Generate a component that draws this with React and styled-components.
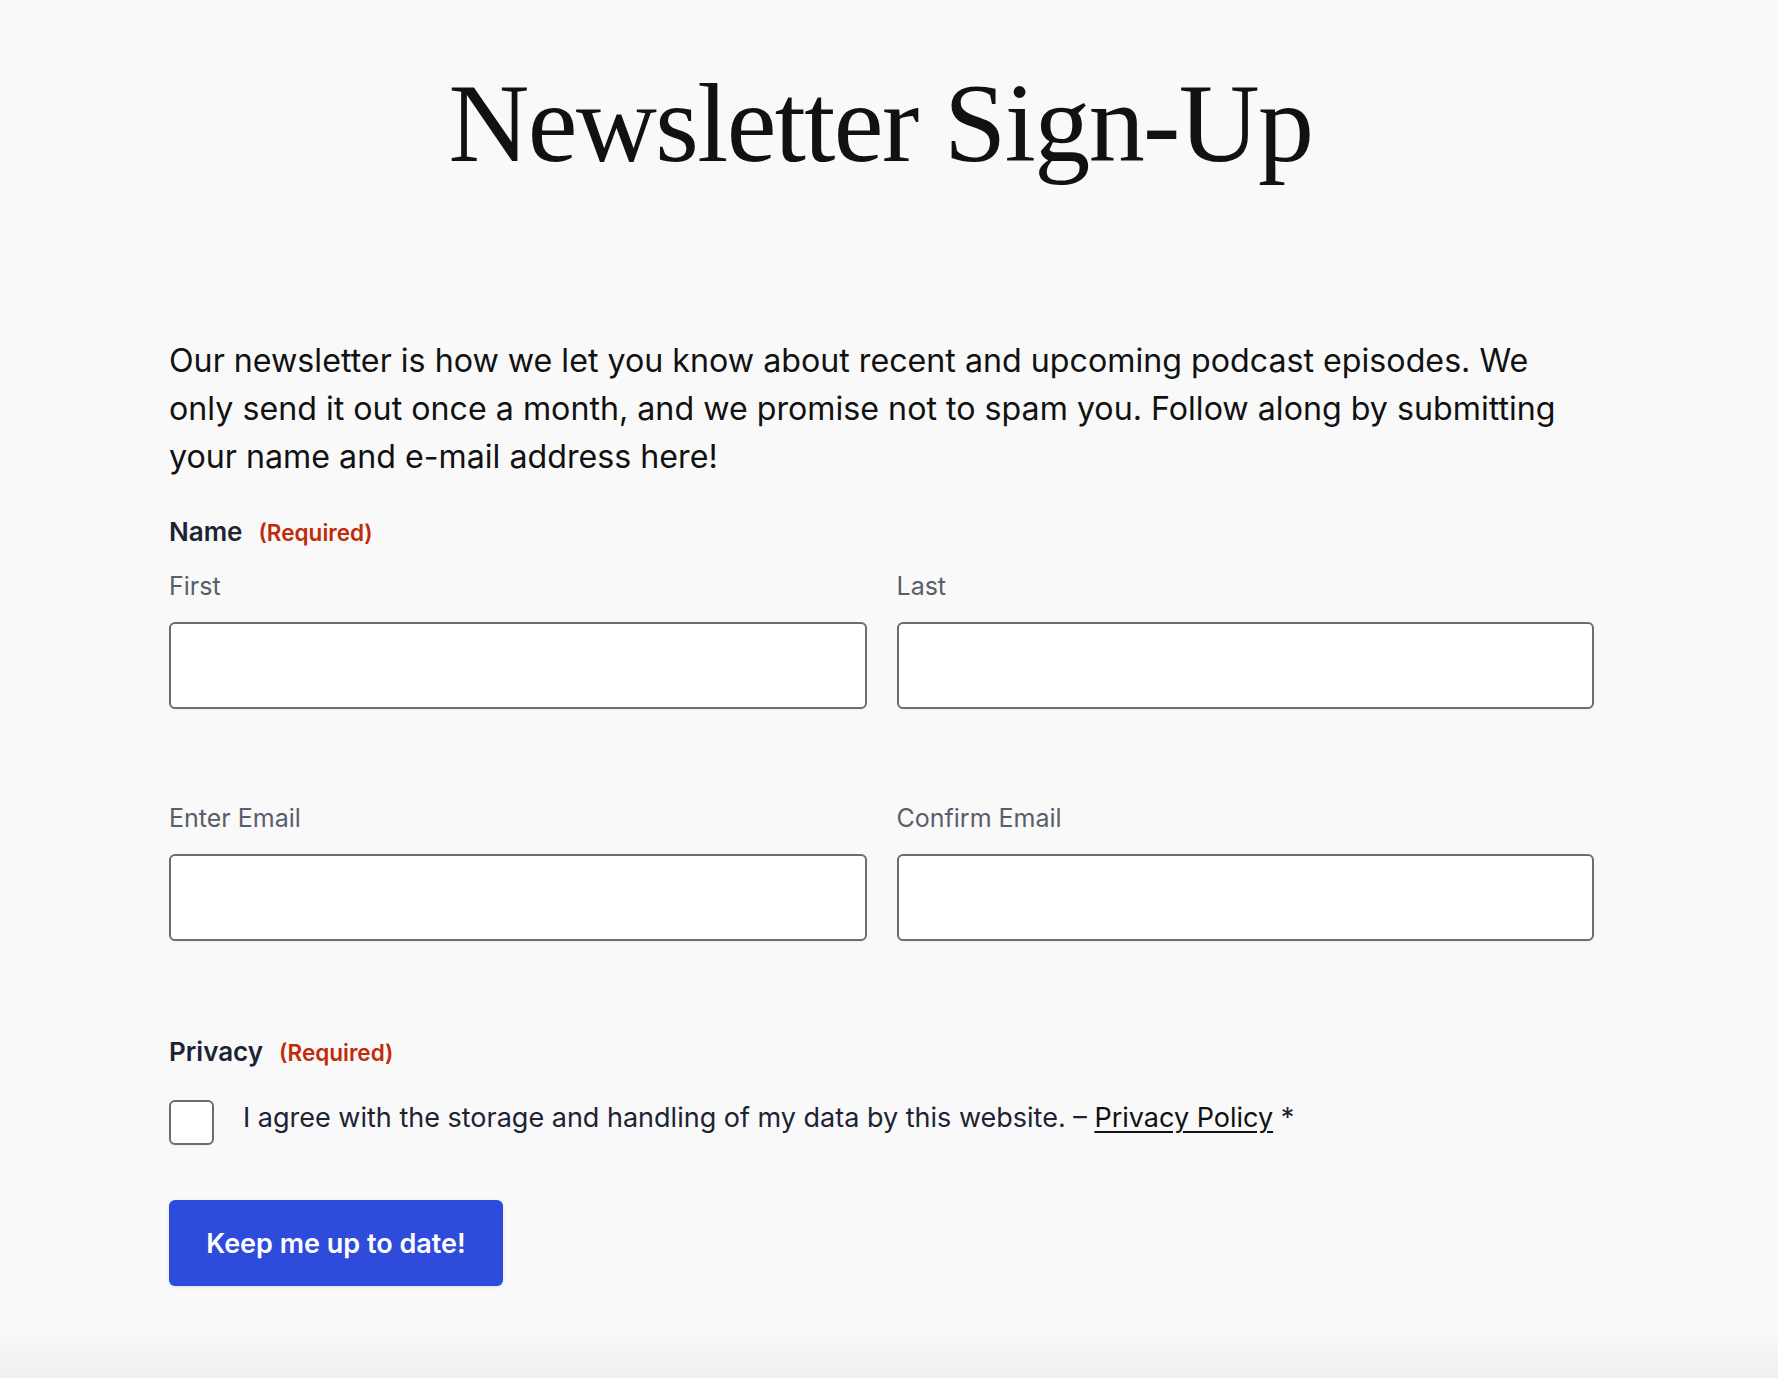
import React from "react";
import styled, { createGlobalStyle } from "styled-components";

const GlobalStyle = createGlobalStyle`
  html, body {
    margin: 0;
    padding: 0;
    background: #f9f9f9;
  }
  body {
    font-family: Inter, "Noto Sans", sans-serif;
    color: #111111;
  }
  * { box-sizing: border-box; }
`;

const Page = styled.div`
  min-height: 1378px;
  background: linear-gradient(to bottom, #f9f9f9 0, #f9f9f9 1330px, #efefef 1378px);
  padding-top: 62px;
`;

const Container = styled.div`
  width: 1440px;
  margin: 0 auto;
`;

const Title = styled.h1`
  margin: 0;
  padding-right: 17px;
  font-family: "Liberation Serif", "Times New Roman", serif;
  font-weight: 400;
  font-size: 112px;
  line-height: 1.1;
  letter-spacing: -1.6px;
  text-align: center;
  color: #111111;
`;

const Intro = styled.p`
  margin: 152px 0 0;
  font-size: 32.2px;
  line-height: 48px;
  color: #111111;
`;

const Form = styled.form`
  margin-top: 35px;
  padding-right: 15px;
`;

const Legend = styled.div`
  display: flex;
  align-items: baseline;
  gap: 16px;
  font-size: 26px;
  font-weight: 600;
  color: #1c2333;
`;

const Required = styled.span`
  font-size: 22.5px;
  font-weight: 600;
  color: #c02b0a;
`;

const Grid = styled.div`
  display: grid;
  grid-template-columns: 1fr 1fr;
  column-gap: 30px;
  margin-top: ${(p) => p.$top || 0}px;
`;

const Field = styled.label`
  display: flex;
  flex-direction: column;
`;

const SubLabel = styled.span`
  font-size: 25px;
  line-height: 30px;
  color: #585e6a;
  margin-bottom: 21px;
`;

const Input = styled.input`
  height: 87px;
  width: 100%;
  border: 2px solid #686e77;
  border-radius: 6px;
  background: #ffffff;
  box-shadow: 0 1px 2px rgba(16, 24, 40, 0.06);
  font: inherit;
  font-size: 24px;
  padding: 0 16px;
  outline: none;
`;

const Section = styled.div`
  margin-top: ${(p) => p.$top}px;
`;

const CheckRow = styled.label`
  display: flex;
  align-items: flex-start;
  gap: 29px;
  margin-top: 33px;
  font-size: 27px;
  line-height: 35px;
  color: #1c2333;
`;

const Box = styled.span`
  width: 45px;
  height: 45px;
  flex: none;
  border: 2px solid #686e77;
  border-radius: 6px;
  background: #ffffff;
  box-shadow: 0 1px 2px rgba(16, 24, 40, 0.06);
`;

const PolicyLink = styled.a`
  color: #111111;
  text-decoration: underline;
  text-underline-offset: 4px;
`;

const Submit = styled.button`
  margin-top: 55px;
  width: 334px;
  height: 86px;
  border: none;
  border-radius: 6px;
  background: #2e4bdc;
  color: #ffffff;
  font-family: Inter, "Noto Sans", sans-serif;
  font-size: 27px;
  font-weight: 600;
  box-shadow: 0 1px 3px rgba(16, 24, 40, 0.12);
  cursor: pointer;
`;

export default function App() {
  return (
    <>
      <GlobalStyle />
      <Page>
        <Container>
          <Title>Newsletter Sign-Up</Title>
          <Intro>
            Our newsletter is how we let you know about recent and upcoming podcast episodes. We
            <br />
            only send it out once a month, and we promise not to spam you. Follow along by submitting
            <br />
            your name and e-mail address here!
          </Intro>
          <Form onSubmit={(e) => e.preventDefault()}>
            <Legend>
              Name <Required>(Required)</Required>
            </Legend>
            <Grid $top={24}>
              <Field>
                <SubLabel>First</SubLabel>
                <Input type="text" />
              </Field>
              <Field>
                <SubLabel>Last</SubLabel>
                <Input type="text" />
              </Field>
            </Grid>
            <Grid $top={94}>
              <Field>
                <SubLabel>Enter Email</SubLabel>
                <Input type="email" />
              </Field>
              <Field>
                <SubLabel>Confirm Email</SubLabel>
                <Input type="email" />
              </Field>
            </Grid>
            <Section $top={95}>
              <Legend>
                Privacy <Required>(Required)</Required>
              </Legend>
              <CheckRow>
                <Box />
                <span>
                  I agree with the storage and handling of my data by this website. –{" "}
                  <PolicyLink href="#">Privacy Policy</PolicyLink> *
                </span>
              </CheckRow>
            </Section>
            <Submit type="submit">Keep me up to date!</Submit>
          </Form>
        </Container>
      </Page>
    </>
  );
}
